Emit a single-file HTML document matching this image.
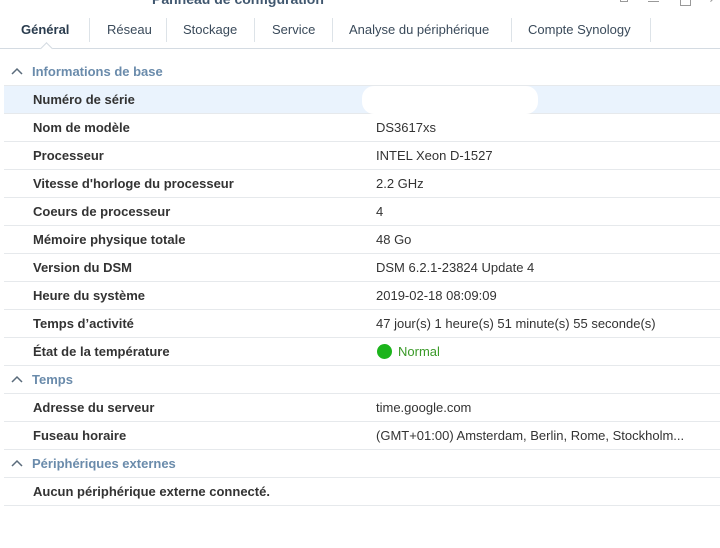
<!DOCTYPE html>
<html><head><meta charset="utf-8"><style>
body{margin:0;width:720px;height:548px;background:#fff;font-family:"Liberation Sans",sans-serif;position:relative;overflow:hidden;color:#333}
.title{position:absolute;left:152px;top:-9px;font-size:14px;font-weight:bold;color:#40576f}
.tabs{position:absolute;left:0;top:14px;width:720px;height:34px;border-bottom:1px solid #d4dbe2}
.tab{position:absolute;top:8px;font-size:13px;color:#3a4a5a}
.sep{position:absolute;top:4px;width:1px;height:24px;background:#dde3e8}
.row{position:absolute;left:4px;width:716px;height:27px;border-bottom:1px solid #e6e9ec;font-size:13px}
.row b{position:absolute;left:29px;top:6px;color:#333}
.row span{position:absolute;left:372px;top:6px;color:#333}
.hd{color:#6a8bab;font-weight:bold}
.hd svg{position:absolute;left:7px;top:9px}
.hd em{position:absolute;left:28px;top:6px;font-style:normal}
</style></head><body>
<div class="title">Panneau de configuration</div>
<div style="position:absolute;left:620px;top:-2px;width:6px;height:3px;border:1px solid #999;border-top:0"></div>
<div style="position:absolute;left:648px;top:1px;width:11px;height:1px;background:#999"></div>
<div style="position:absolute;left:680px;top:-4px;width:9px;height:8px;border:1px solid #999"></div>
<div style="position:absolute;left:710px;top:-2px;width:8px;height:2px;border-top:1px solid #999;transform:rotate(-45deg)"></div>
<div class="tabs">
<div class="tab" style="left:21px;font-weight:bold;color:#2a3c4e">Général</div>
<div class="sep" style="left:89px"></div>
<div class="tab" style="left:107px">Réseau</div>
<div class="sep" style="left:166px"></div>
<div class="tab" style="left:183px">Stockage</div>
<div class="sep" style="left:254px"></div>
<div class="tab" style="left:272px">Service</div>
<div class="sep" style="left:332px"></div>
<div class="tab" style="left:349px">Analyse du périphérique</div>
<div class="sep" style="left:511px"></div>
<div class="tab" style="left:528px">Compte Synology</div>
<div class="sep" style="left:650px"></div>
<div style="position:absolute;left:42px;top:30px;width:8px;height:8px;background:#fff;border-left:1px solid #d4dbe2;border-top:1px solid #d4dbe2;transform:rotate(45deg)"></div>
</div>
<div class="row hd" style="top:58px"><svg width="12" height="8"><polyline points="1,7 6,2 11,7" fill="none" stroke="#5a6b7b" stroke-width="1.5"/></svg><em>Informations de base</em></div>
<div class="row" style="top:86px;background:#eaf3fd"><b>Numéro de série</b><div style="position:absolute;left:358px;top:0;width:176px;height:28px;background:#fff;border-radius:12px"></div></div>
<div class="row" style="top:114px"><b>Nom de modèle</b><span>DS3617xs</span></div>
<div class="row" style="top:142px"><b>Processeur</b><span>INTEL Xeon D-1527</span></div>
<div class="row" style="top:170px"><b>Vitesse d'horloge du processeur</b><span>2.2 GHz</span></div>
<div class="row" style="top:198px"><b>Coeurs de processeur</b><span>4</span></div>
<div class="row" style="top:226px"><b>Mémoire physique totale</b><span>48 Go</span></div>
<div class="row" style="top:254px"><b>Version du DSM</b><span>DSM 6.2.1-23824 Update 4</span></div>
<div class="row" style="top:282px"><b>Heure du système</b><span>2019-02-18 08:09:09</span></div>
<div class="row" style="top:310px"><b>Temps d’activité</b><span>47 jour(s) 1 heure(s) 51 minute(s) 55 seconde(s)</span></div>
<div class="row" style="top:338px"><b>État de la température</b><div style="position:absolute;left:373px;top:6px;width:15px;height:15px;border-radius:50%;background:#1cb41c"></div><span style="left:394px;color:#3a9a28">Normal</span></div>
<div class="row hd" style="top:366px"><svg width="12" height="8"><polyline points="1,7 6,2 11,7" fill="none" stroke="#5a6b7b" stroke-width="1.5"/></svg><em>Temps</em></div>
<div class="row" style="top:394px"><b>Adresse du serveur</b><span>time.google.com</span></div>
<div class="row" style="top:422px"><b>Fuseau horaire</b><span>(GMT+01:00) Amsterdam, Berlin, Rome, Stockholm...</span></div>
<div class="row hd" style="top:450px"><svg width="12" height="8"><polyline points="1,7 6,2 11,7" fill="none" stroke="#5a6b7b" stroke-width="1.5"/></svg><em>Périphériques externes</em></div>
<div class="row" style="top:478px"><b>Aucun périphérique externe connecté.</b></div>
</body></html>
